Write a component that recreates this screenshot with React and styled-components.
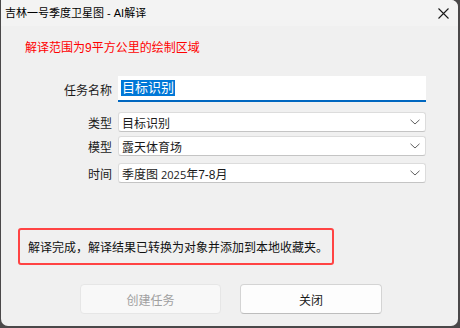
import React from "react";
import styled, { createGlobalStyle } from "styled-components";

const Global = createGlobalStyle`
  html, body {
    margin: 0;
    padding: 0;
    background: #4a4849;
    width: 460px;
    height: 328px;
    overflow: hidden;
  }
  * { box-sizing: border-box; }
`;

const FONT = `"Liberation Sans", "Noto Sans CJK SC", sans-serif`;

const Window = styled.div`
  margin-left: 1px;
  width: 457px;
  height: 326px;
  background: #f0f0f0;
  border-radius: 0 7px 7px 7px;
  overflow: hidden;
  font-family: ${FONT};
  color: #000;
  display: flex;
  flex-direction: column;
`;

const TitleBar = styled.div`
  height: 26px;
  flex: none;
  background: #f3f3f3;
  display: flex;
  align-items: center;
  justify-content: space-between;
  padding: 0 9px 0 4px;
`;

const Title = styled.span`
  font-size: 11px;
  line-height: 14px;
`;

const CloseBtn = styled.div`
  width: 12px;
  height: 12px;
  display: flex;
  align-items: center;
  justify-content: center;
`;

const Hint = styled.div`
  margin: 14px 0 0 24px;
  font-size: 12px;
  line-height: 16px;
  color: #ff0000;
`;

const Form = styled.div`
  margin-top: 20px;
  display: grid;
  grid-template-columns: 111px 308px;
  column-gap: 6px;
`;

const Label = styled.div`
  grid-column: 1;
  margin-top: ${(p) => p.$mt || 0}px;
  height: ${(p) => p.$h}px;
  display: flex;
  align-items: center;
  justify-content: flex-end;
  font-size: 12px;
  color: #1a1a1a;
`;

const TextBox = styled.div`
  grid-column: 2;
  height: 26px;
  background: #fff;
  border-bottom: 2px solid #0067c0;
  display: flex;
  align-items: center;
  padding-left: 3px;
`;

const Selected = styled.span`
  background: #0078d7;
  color: #fff;
  font-size: 13px;
  line-height: 16px;
  padding: 0 1px;
`;

const Combo = styled.div`
  grid-column: 2;
  margin-top: ${(p) => p.$mt || 0}px;
  height: 20px;
  background: #fff;
  border: 1px solid #dcdcdc;
  border-bottom-color: #c4c4c4;
  border-radius: 3px;
  display: flex;
  align-items: center;
  justify-content: space-between;
  padding: 0 5px 0 3px;
  font-size: 12px;
  color: #1a1a1a;
`;

const Num = styled.span`
  font-family: "Open Sans", "Noto Sans CJK SC", sans-serif;
  font-size: 11px;
  margin-left: 3px;
`;

const Notice = styled.div`
  margin: 45px 0 0 17px;
  width: 316px;
  height: 37px;
  border: 2px solid #ff4343;
  border-radius: 3px;
  display: flex;
  align-items: center;
  padding-left: 8px;
  font-size: 12px;
  color: #111;
`;

const Buttons = styled.div`
  margin: 19px 0 0 79px;
  display: flex;
  gap: 19px;
`;

const Button = styled.button`
  width: ${(p) => p.$w}px;
  height: 30px;
  font-family: ${FONT};
  font-size: 12px;
  border-radius: 4px;
  border: 1px solid ${(p) => (p.disabled ? "#e6e6e6" : "#d4d4d4")};
  border-bottom-color: ${(p) => (p.disabled ? "#e6e6e6" : "#bdbdbd")};
  background: ${(p) => (p.disabled ? "#f8f8f8" : "#fdfdfd")};
  color: ${(p) => (p.disabled ? "#a0a0a0" : "#1a1a1a")};
  padding: 0;
`;

const Chevron = () => (
  <svg width="10" height="6" viewBox="0 0 10 6">
    <path d="M0.5 0.8 L5 5 L9.5 0.8" fill="none" stroke="#606060" strokeWidth="1" />
  </svg>
);

export default function App() {
  return (
    <>
      <Global />
      <Window>
        <TitleBar>
          <Title>吉林一号季度卫星图 - AI解译</Title>
          <CloseBtn>
            <svg width="11" height="11" viewBox="0 0 11 11">
              <path d="M0.5 0.5 L10.5 10.5 M10.5 0.5 L0.5 10.5" stroke="#1a1a1a" strokeWidth="1.1" />
            </svg>
          </CloseBtn>
        </TitleBar>
        <Hint>解译范围为9平方公里的绘制区域</Hint>
        <Form>
          <Label $h={26}>任务名称</Label>
          <TextBox>
            <Selected>目标识别</Selected>
          </TextBox>
          <Label $mt={10} $h={20}>类型</Label>
          <Combo $mt={10}>
            <span>目标识别</span>
            <Chevron />
          </Combo>
          <Label $mt={4} $h={20}>模型</Label>
          <Combo $mt={4}>
            <span>露天体育场</span>
            <Chevron />
          </Combo>
          <Label $mt={7} $h={20}>时间</Label>
          <Combo $mt={7}>
            <span>
              季度图<Num>2025</Num>年7-8月
            </span>
            <Chevron />
          </Combo>
        </Form>
        <Notice>解译完成，解译结果已转换为对象并添加到本地收藏夹。</Notice>
        <Buttons>
          <Button $w={141} disabled>创建任务</Button>
          <Button $w={142}>关闭</Button>
        </Buttons>
      </Window>
    </>
  );
}
